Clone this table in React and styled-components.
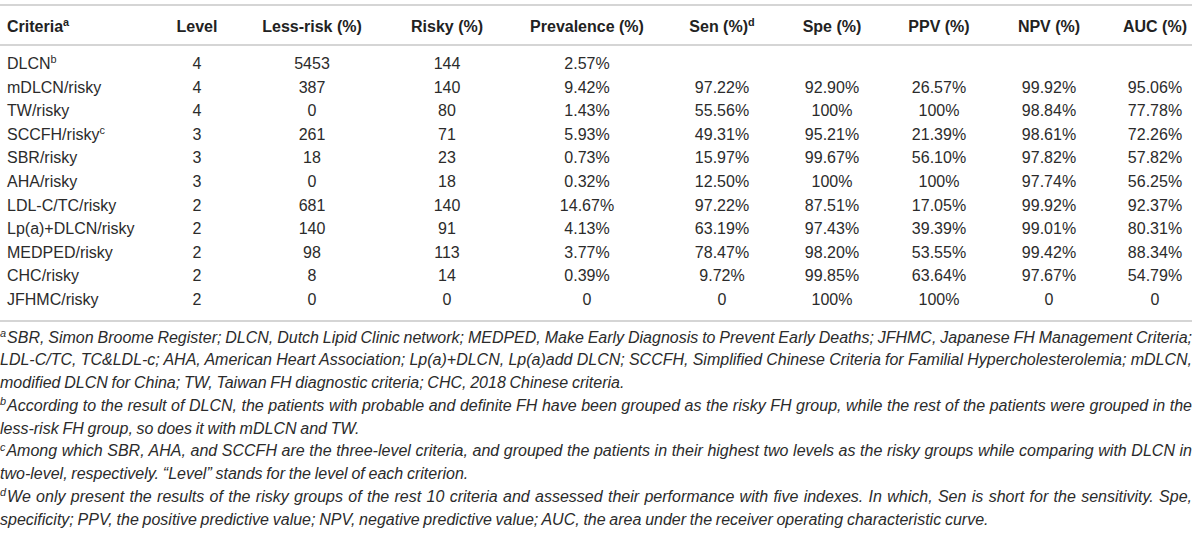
import React from "react";
import styled, { createGlobalStyle } from "styled-components";

const GlobalStyle = createGlobalStyle`
  html, body {
    margin: 0;
    padding: 0;
    background: #ffffff;
  }
  body {
    font-family: "Liberation Sans", Arial, Helvetica, sans-serif;
    color: #2b2b2b;
  }
`;

const Page = styled.div`
  width: 1200px;
  padding-top: 4px;
`;

const Rule = styled.div`
  width: 1192px;
  height: 2px;
  background: #d5d5d5;
`;

const COLS = "160px 74px 156px 114px 166px 104px 116px 98px 122px 90px";

const HeaderRow = styled.div`
  display: grid;
  grid-template-columns: ${COLS};
  padding: 9px 0 5px;
  font-size: 16px;
  line-height: 24px;
  font-weight: 700;
  color: #222;
`;

const Body = styled.div`
  padding: 6px 0 8px;
`;

const Row = styled.div`
  display: grid;
  grid-template-columns: ${COLS};
  font-size: 16px;
  line-height: 23.6px;
  height: 23.6px;
`;

const Cell = styled.div`
  text-align: ${(p) => (p.$first ? "left" : "center")};
  padding-left: ${(p) => (p.$first ? "7px" : "0")};
  white-space: nowrap;
`;

const Sup = styled.sup`
  font-size: 0.68em;
  line-height: 0;
  vertical-align: 0.55em;
`;

const Notes = styled.div`
  width: 1192px;
  padding-top: 5px;
  font-size: 16px;
  line-height: 22.75px;
  font-style: italic;
  word-spacing: -0.7px;
  color: #2b2b2b;
`;

const NoteLine = styled.div`
  text-align: justify;
  text-align-last: ${(p) => (p.$last ? "left" : "justify")};
`;

const NoteSup = styled.sup`
  font-size: 0.68em;
  line-height: 0;
  vertical-align: 0.5em;
  margin-right: 1px;
`;

const headers = [
  <>Criteria<Sup>a</Sup></>,
  "Level",
  "Less-risk (%)",
  "Risky (%)",
  "Prevalence (%)",
  <>Sen (%)<Sup>d</Sup></>,
  "Spe (%)",
  "PPV (%)",
  "NPV (%)",
  "AUC (%)",
];

const rows = [
  [<>DLCN<Sup>b</Sup></>, "4", "5453", "144", "2.57%", "", "", "", "", ""],
  ["mDLCN/risky", "4", "387", "140", "9.42%", "97.22%", "92.90%", "26.57%", "99.92%", "95.06%"],
  ["TW/risky", "4", "0", "80", "1.43%", "55.56%", "100%", "100%", "98.84%", "77.78%"],
  [<>SCCFH/risky<Sup>c</Sup></>, "3", "261", "71", "5.93%", "49.31%", "95.21%", "21.39%", "98.61%", "72.26%"],
  ["SBR/risky", "3", "18", "23", "0.73%", "15.97%", "99.67%", "56.10%", "97.82%", "57.82%"],
  ["AHA/risky", "3", "0", "18", "0.32%", "12.50%", "100%", "100%", "97.74%", "56.25%"],
  ["LDL-C/TC/risky", "2", "681", "140", "14.67%", "97.22%", "87.51%", "17.05%", "99.92%", "92.37%"],
  ["Lp(a)+DLCN/risky", "2", "140", "91", "4.13%", "63.19%", "97.43%", "39.39%", "99.01%", "80.31%"],
  ["MEDPED/risky", "2", "98", "113", "3.77%", "78.47%", "98.20%", "53.55%", "99.42%", "88.34%"],
  ["CHC/risky", "2", "8", "14", "0.39%", "9.72%", "99.85%", "63.64%", "97.67%", "54.79%"],
  ["JFHMC/risky", "2", "0", "0", "0", "0", "100%", "100%", "0", "0"],
];

const notes = [
  {
    mark: "a",
    lines: [
      "SBR, Simon Broome Register; DLCN, Dutch Lipid Clinic network; MEDPED, Make Early Diagnosis to Prevent Early Deaths; JFHMC, Japanese FH Management Criteria;",
      "LDL-C/TC, TC&LDL-c; AHA, American Heart Association; Lp(a)+DLCN, Lp(a)add DLCN; SCCFH, Simplified Chinese Criteria for Familial Hypercholesterolemia; mDLCN,",
      "modified DLCN for China; TW, Taiwan FH diagnostic criteria; CHC, 2018 Chinese criteria.",
    ],
  },
  {
    mark: "b",
    lines: [
      "According to the result of DLCN, the patients with probable and definite FH have been grouped as the risky FH group, while the rest of the patients were grouped in the",
      "less-risk FH group, so does it with mDLCN and TW.",
    ],
  },
  {
    mark: "c",
    lines: [
      "Among which SBR, AHA, and SCCFH are the three-level criteria, and grouped the patients in their highest two levels as the risky groups while comparing with DLCN in",
      "two-level, respectively. \u201cLevel\u201d stands for the level of each criterion.",
    ],
  },
  {
    mark: "d",
    lines: [
      "We only present the results of the risky groups of the rest 10 criteria and assessed their performance with five indexes. In which, Sen is short for the sensitivity. Spe,",
      "specificity; PPV, the positive predictive value; NPV, negative predictive value; AUC, the area under the receiver operating characteristic curve.",
    ],
  },
];

export default function App() {
  return (
    <Page>
      <GlobalStyle />
      <Rule />
      <HeaderRow>
        {headers.map((h, i) => (
          <Cell key={i} $first={i === 0}>
            {h}
          </Cell>
        ))}
      </HeaderRow>
      <Rule />
      <Body>
        {rows.map((r, ri) => (
          <Row key={ri}>
            {r.map((c, ci) => (
              <Cell key={ci} $first={ci === 0}>
                {c}
              </Cell>
            ))}
          </Row>
        ))}
      </Body>
      <Rule />
      <Notes>
        {notes.map((n) =>
          n.lines.map((l, li) => (
            <NoteLine key={n.mark + li} $last={li === n.lines.length - 1}>
              {li === 0 && <NoteSup>{n.mark}</NoteSup>}
              {l}
            </NoteLine>
          ))
        )}
      </Notes>
    </Page>
  );
}
